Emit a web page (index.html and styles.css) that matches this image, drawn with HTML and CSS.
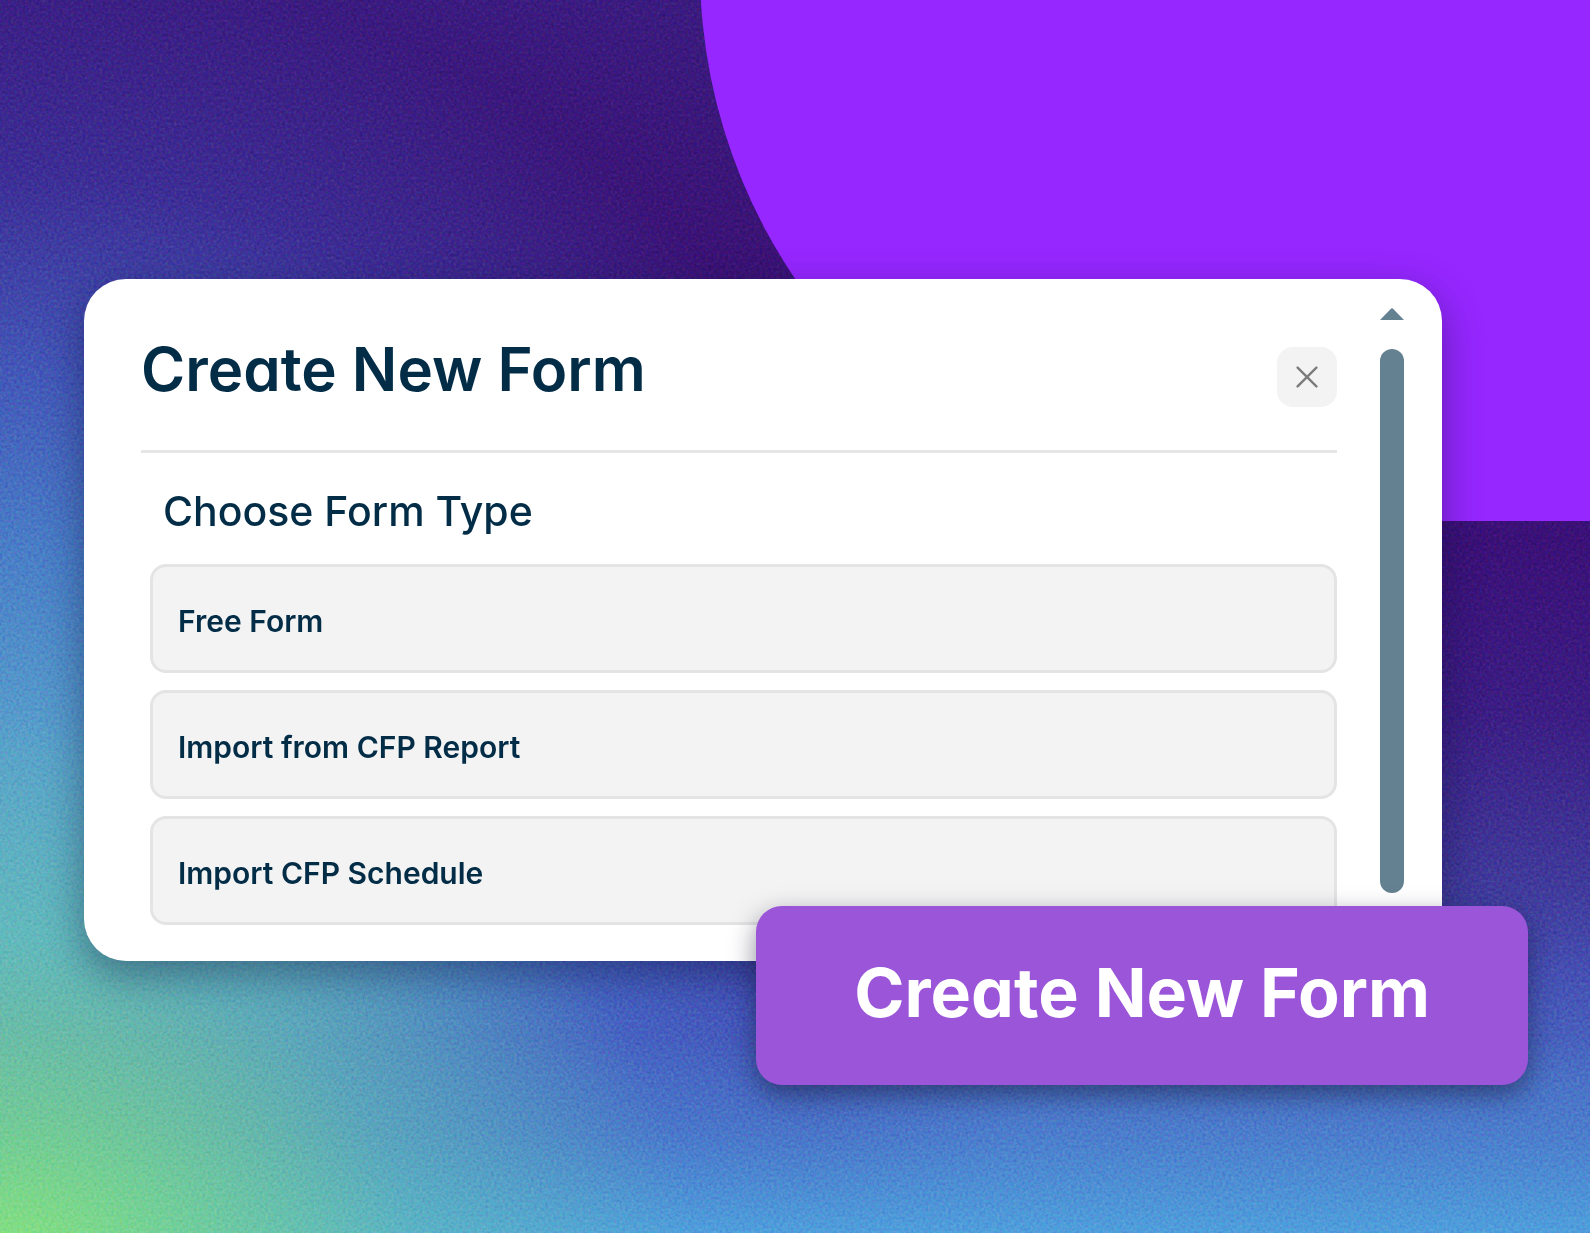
FILE: index.html
```html
<!DOCTYPE html>
<html lang="en">
<head>
    <meta charset="UTF-8">
    <meta name="viewport" content="width=device-width, initial-scale=1.0">
    <title>Create New Form</title>
    <link rel="stylesheet" href="styles.css">
</head>
<body>
    <!-- Background -->
    <svg class="grain" aria-hidden="true">
        <filter id="noise" x="0" y="0" width="100%" height="100%" color-interpolation-filters="sRGB">
            <feTurbulence type="fractalNoise" baseFrequency="0.35" numOctaves="2" seed="4" />
            <feColorMatrix type="matrix" values="1 0 0 0 0  0 1 0 0 0  0 0 1 0 0  0 0 0 0 1" />
        </filter>
        <rect width="100%" height="100%" filter="url(#noise)" />
    </svg>
    <div class="shape"></div>

    <main class="card">
        <div class="card-content">
            <header class="card-header">
                <h1>Create New Form</h1>
                <button class="close-btn" type="button" aria-label="Close">
                    <svg width="22" height="22" viewBox="0 0 22 22" fill="none" stroke="#7c7c7c" stroke-width="2.4" stroke-linecap="round">
                        <path d="M1.6 1.6L20.4 20.4M20.4 1.6L1.6 20.4" />
                    </svg>
                </button>
            </header>

            <h2>Choose Form Type</h2>
            <div class="options">
                <button class="option" type="button">Free Form</button>
                <button class="option" type="button">Import from CFP Report</button>
                <button class="option" type="button">Import CFP Schedule</button>
            </div>
        </div>

        <div class="scrollbar" aria-hidden="true">
            <svg width="24" height="12" viewBox="0 0 24 12">
                <path d="M0 12L11.2 .5Q12 0 12.8 .5L24 12Z" fill="#648191" />
            </svg>
            <div class="thumb"></div>
        </div>

        <button class="create-btn" type="button">Create New Form</button>
    </main>
</body>
</html>
```
FILE: styles.css
```css
* {
    box-sizing: border-box;
}

body {
    position: relative;
    min-height: 100vh;
    margin: 0;
    padding: 279px 148px 272px 84px;
    overflow-x: hidden;
    font-family: Inter, sans-serif;
    font-feature-settings: "cv11";
    color: #032d47;
    background:
        radial-gradient(ellipse 44% 46% at 0% 104%, rgba(146, 236, 110, 0.9) 0%, rgba(128, 226, 130, 0.75) 25%, rgba(108, 210, 165, 0.4) 60%, rgba(90, 180, 200, 0) 100%),
        linear-gradient(to top, #4f9fdc 0%, rgba(76, 130, 208, 0.7) 8%, rgba(70, 90, 190, 0.3) 16%, rgba(70, 80, 180, 0) 24%),
        radial-gradient(ellipse 64% 90% at 0% 86%, #60b0cc 0%, #58a0cc 28%, rgba(74, 132, 204, 0.95) 46%, rgba(68, 100, 196, 0.85) 62%, rgba(62, 64, 174, 0.55) 80%, rgba(58, 30, 140, 0) 100%),
        linear-gradient(to top, #4c78c8 0%, #4a70c4 12%, #454eb2 21%, #403a9c 28%, #3b1c84 42%, #3a1078 56%, #3a1276 80%, #3a1a80 100%);
}

.grain {
    position: absolute;
    inset: 0;
    width: 100%;
    height: 100%;
    opacity: 0.5;
    mix-blend-mode: soft-light;
}

.shape {
    position: absolute;
    top: -31px;
    left: 44%;
    right: 0;
    height: 552px;
    background-color: #9627ff;
    border-bottom-left-radius: 552px;
}

.card {
    position: relative;
    display: flex;
    gap: 43px;
    padding: 0 38px 0 57px;
    background-color: #fff;
    border-radius: 42px;
    box-shadow: 0 14px 40px rgba(10, 10, 50, 0.4);
}

.card-content {
    flex: 1;
    padding: 52px 0 36px;
}

.card-header {
    display: flex;
    justify-content: space-between;
    align-items: flex-end;
    padding-bottom: 43px;
    border-bottom: 3px solid #e6e6e6;
}

h1 {
    margin: 0;
    font-size: 60px;
    font-weight: 600;
    line-height: 76px;
}

h2 {
    margin: 34px 0 29px;
    padding-left: 22px;
    font-size: 41px;
    font-weight: 500;
    line-height: 48px;
}

button {
    border: none;
    font-family: inherit;
    font-feature-settings: inherit;
    cursor: pointer;
}

.close-btn {
    display: flex;
    align-items: center;
    justify-content: center;
    width: 60px;
    height: 60px;
    padding: 0;
    background-color: #f3f3f3;
    border-radius: 16px;
}

.options {
    display: flex;
    flex-direction: column;
    gap: 17px;
    padding-left: 9px;
}

.option {
    padding: 36px 25px 31px;
    background-color: #f3f3f3;
    border: 3px solid #e4e4e4;
    border-radius: 16px;
    color: #032d47;
    font-size: 30px;
    font-weight: 600;
    line-height: 36px;
    text-align: left;
}

.scrollbar {
    display: flex;
    flex-direction: column;
    gap: 29px;
    padding: 29px 0 68px;
}

.thumb {
    flex: 1;
    width: 24px;
    background-color: #648191;
    border-radius: 12px;
}

.create-btn {
    position: absolute;
    right: -86px;
    bottom: -124px;
    padding: 44px 98px 51px;
    background-color: #9b55d9;
    border-radius: 26px;
    box-shadow: 0 10px 26px rgba(20, 20, 50, 0.5);
    color: #fff;
    font-size: 68px;
    font-weight: 700;
    line-height: 84px;
    white-space: nowrap;
}
```
